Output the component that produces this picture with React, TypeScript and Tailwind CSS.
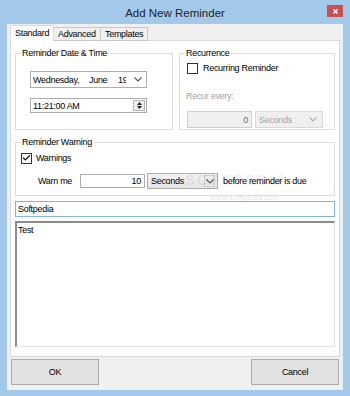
import { Check } from 'lucide-react'

function Chevron({ color = '#555' }: { color?: string }) {
  return (
    <svg width="8" height="5" viewBox="0 0 8 5" className="shrink-0">
      <path d="M0.5 0.5 L4 4 L7.5 0.5" fill="none" stroke={color} strokeWidth="1.1" />
    </svg>
  )
}

function CheckBox({ checked }: { checked?: boolean }) {
  return (
    <div className="w-[11px] h-[11px] border border-[#333] bg-white flex items-center justify-center shrink-0">
      {checked && <Check size={10} strokeWidth={3.5} className="text-[#111]" />}
    </div>
  )
}

export default function App() {
  return (
    <div className="w-[350px] h-[396px] bg-[#a3c9ea] flex flex-col overflow-hidden text-[9px] leading-[12px] tracking-[-0.3px] text-[#000] font-['Liberation_Sans',sans-serif]">
      {/* Title bar */}
      <div className="h-[24px] grid grid-cols-[1fr_auto_1fr] items-center">
        <div />
        <div className="text-[11.5px] tracking-normal text-[#222] pt-[1px]">Add New Reminder</div>
        <div className="flex justify-end items-start h-full pr-[7px] pt-[5px]">
          <div className="w-[16px] h-[12px] bg-[#c75050] flex items-center justify-center">
            <svg width="5" height="5" viewBox="0 0 5 5">
              <path d="M0.5 0.5 L4.5 4.5 M4.5 0.5 L0.5 4.5" stroke="#fff" strokeWidth="1.4" />
            </svg>
          </div>
        </div>
      </div>

      {/* Client area */}
      <div className="mx-[7px] h-[366px] bg-[#f0f0f0] flex flex-col relative">
        {/* Tabs */}
        <div className="h-[17px] flex items-end pl-[3px] relative z-10">
          <div className="h-[16px] w-[44px] pl-[4px] bg-white border border-b-0 border-[#d9d9d9] flex items-center pb-[2px]">Standard</div>
          <div className="h-[14px] w-[47px] pl-[4px] bg-[#f0f0f0] border border-l-0 border-[#c8c8c8] flex items-center">Advanced</div>
          <div className="h-[14px] w-[47px] pl-[4px] bg-[#f0f0f0] border border-l-0 border-[#c8c8c8] flex items-center">Templates</div>
        </div>

        {/* Tab page */}
        <div className="mx-[3px] -mt-[1px] h-[317px] bg-white border border-[#d9d9d9] px-[4px] flex flex-col">
          <div className="flex gap-[6px] mt-[6px]">
            {/* Reminder Date & Time */}
            <fieldset className="w-[158px] h-[83px] border border-[#dcdcdc] flex flex-col">
              <legend className="ml-[5px] px-[1px]">Reminder Date &amp; Time</legend>
              <div className="ml-[14px] mt-[12px] w-[117px] h-[17px] border border-[#abadb3] flex items-center pl-[2px] pr-[4px]">
                <span className="w-[56px] shrink-0">Wednesday,</span>
                <span className="w-[29px] shrink-0">June</span>
                <span className="w-[8px] shrink-0 overflow-hidden whitespace-nowrap">19</span>
                <div className="flex-1" />
                <Chevron />
              </div>
              <div className="ml-[14px] mt-[10px] w-[117px] h-[15px] border border-[#abadb3] flex items-center pl-[2px] pr-[1px]">
                <span>11:21:00 AM</span>
                <div className="flex-1" />
                <div className="w-[12px] h-[11px] border border-[#b5b5b5] bg-[#ededed] flex flex-col items-center justify-center gap-[1px]">
                  <svg width="5" height="3" viewBox="0 0 5 3"><path d="M0 3 L2.5 0 L5 3 Z" fill="#222" /></svg>
                  <svg width="5" height="3" viewBox="0 0 5 3"><path d="M0 0 L2.5 3 L5 0 Z" fill="#222" /></svg>
                </div>
              </div>
            </fieldset>

            {/* Recurrence */}
            <fieldset className="w-[156px] h-[83px] border border-[#dcdcdc] flex flex-col">
              <legend className="ml-[5px] px-[1px]">Recurrence</legend>
              <div className="flex items-center ml-[7px] mt-[3px] gap-[5px]">
                <CheckBox />
                <span>Recurring Reminder</span>
              </div>
              <div className="ml-[6px] mt-[16px] text-[#a3a3a3]">Recur every:</div>
              <div className="flex ml-[7px] mt-[9px] gap-[3px]">
                <div className="w-[65px] h-[17px] border border-[#cfcfcf] bg-[#f0f0f0] text-[#6d6d6d] flex items-center justify-end pr-[3px]">0</div>
                <div className="w-[68px] h-[17px] border border-[#d9d9d9] bg-[#efefef] text-[#a3a3a3] flex items-center pl-[3px] pr-[5px]">
                  <span>Seconds</span>
                  <div className="flex-1" />
                  <Chevron color="#b0b0b0" />
                </div>
              </div>
            </fieldset>
          </div>

          {/* Reminder Warning */}
          <fieldset className="mt-[6px] w-[320px] h-[60px] border border-[#dcdcdc] flex flex-col">
            <legend className="ml-[5px] px-[1px]">Reminder Warning</legend>
            <div className="flex items-center ml-[5px] mt-[4px] gap-[4px]">
              <CheckBox checked />
              <span>Warnings</span>
            </div>
            <div className="flex items-center ml-[22px] mt-[9px]">
              <span className="w-[42px]">Warn me</span>
              <div className="w-[65px] h-[14px] border border-[#abadb3] bg-white flex items-center justify-end pr-[3px]">10</div>
              <div className="ml-[2px] w-[71px] h-[16px] border border-[#acacac] bg-gradient-to-b from-[#f2f2f2] to-[#e5e5e5] flex items-center pl-[3px] pr-[2px]">
                <span>Seconds</span>
                <div className="flex-1" />
                <div className="w-[11px] h-[12px] border border-[#cfcfcf] flex items-center justify-center">
                  <Chevron />
                </div>
              </div>
              <span className="ml-[5px]">before reminder is due</span>
            </div>
          </fieldset>

          {/* Title box */}
          <div className="mt-[5px] w-[320px] h-[16px] border border-[#7eb4ea] flex items-center pl-[2px]">Softpedia</div>

          {/* Body text */}
          <div className="mt-[4px] w-[320px] h-[126px] border-t-2 border-l-2 border-r border-b border-t-[#8c8c8c] border-l-[#8c8c8c] border-r-[#e3e3e3] border-b-[#e3e3e3] pl-[1px] pt-[1px]">Test</div>
        </div>

        {/* Buttons */}
        <div className="flex justify-between mx-[4px] mt-[2px]">
          <div className="w-[88px] h-[26px] border border-[#adadad] bg-[#e1e1e1] flex items-center justify-center">OK</div>
          <div className="w-[88px] h-[26px] border border-[#adadad] bg-[#e1e1e1] flex items-center justify-center">Cancel</div>
        </div>

        {/* watermark */}
        <div className="absolute left-[178px] top-[150px] text-[15px] tracking-[2px] text-[#000] opacity-[0.05] font-bold pointer-events-none">SOFTPEDIA</div>
        <div className="absolute left-[203px] top-[168px] text-[8px] tracking-normal text-[#000] opacity-[0.1] pointer-events-none">www.softpedia.com</div>
      </div>
    </div>
  )
}
